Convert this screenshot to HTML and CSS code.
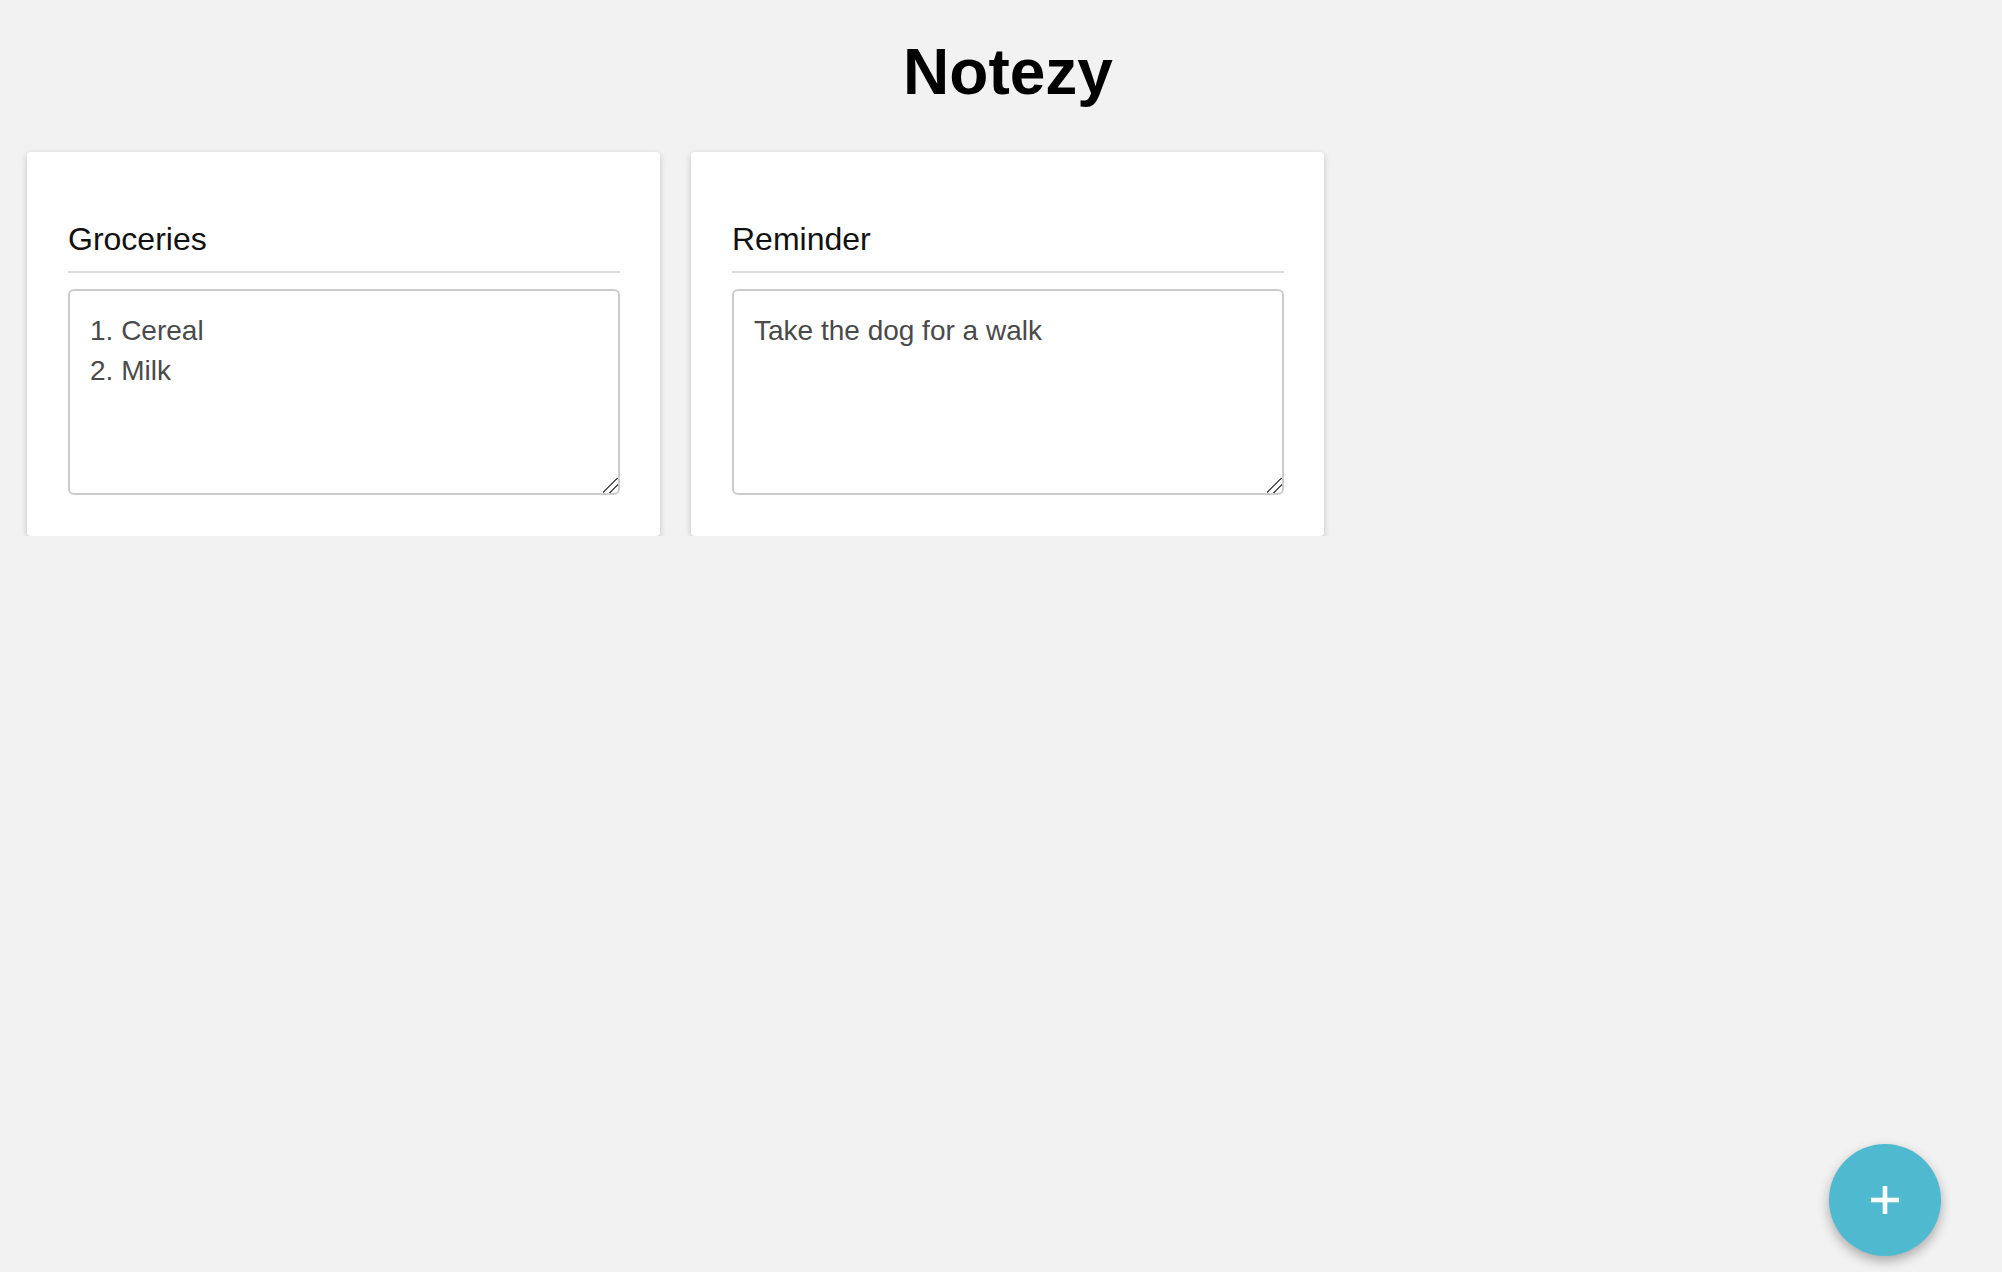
FILE: index.html
```html
<!DOCTYPE html>
<html lang="en">
<head>
<meta charset="utf-8">
<title>Notezy</title>
<link rel="stylesheet" href="styles.css">
</head>
<body>
<header class="header">
  <h1 class="title">Notezy</h1>
</header>
<main class="notes">
  <section class="note">
    <h2 class="note-title">Groceries</h2>
    <textarea class="note-body">1. Cereal
2. Milk</textarea>
  </section>
  <section class="note">
    <h2 class="note-title">Reminder</h2>
    <textarea class="note-body">Take the dog for a walk</textarea>
  </section>
</main>
<button class="fab" aria-label="Add note">
  <svg width="28" height="28" viewBox="0 0 28 28"><rect x="0" y="11.7" width="28" height="4.6" fill="#fff"/><rect x="11.7" y="0" width="4.6" height="28" fill="#fff"/></svg>
</button>
</body>
</html>
```

FILE: styles.css
```css
html, body {
  margin: 0;
  padding: 0;
  background: #f2f2f2;
  font-family: "Liberation Sans", Arial, Helvetica, sans-serif;
}

.header {
  padding-top: 35px;
  padding-left: 14px;
  text-align: center;
}

.title {
  margin: 0;
  font-size: 64px;
  font-weight: bold;
  color: #000;
  line-height: 74px;
}

.notes {
  display: flex;
  gap: 31px;
  padding: 43px 0 0 27px;
  align-items: flex-start;
}

.note {
  width: 633px;
  box-sizing: border-box;
  padding: 40px 40px 41px 41px;
  background: #fff;
  border-radius: 4px;
  box-shadow: 0 2px 6px rgba(0, 0, 0, 0.2);
}

.note-title {
  margin: 29px 0 16px 0;
  padding-bottom: 13px;
  border-bottom: 2px solid #dcdcdc;
  font-size: 32px;
  font-weight: normal;
  line-height: 37px;
  color: #111;
}

.note-body {
  display: block;
  width: 100%;
  height: 206px;
  box-sizing: border-box;
  margin: 0;
  padding: 20px 20px;
  border: 2px solid #cccccc;
  border-radius: 6px;
  font-family: "Liberation Sans", Arial, Helvetica, sans-serif;
  font-size: 28px;
  line-height: 40px;
  color: #4a4a4a;
  background: #fff;
  outline: none;
}

.note-body::-webkit-resizer {
  background: linear-gradient(135deg, transparent 0%, transparent 44%, #555 44%, #555 52%, transparent 52%, transparent 68%, #555 68%, #555 76%, transparent 76%);
}

.fab {
  position: fixed;
  right: 61px;
  bottom: 16px;
  width: 112px;
  height: 112px;
  border: none;
  border-radius: 50%;
  background: #4fb9cf;
  box-shadow: 0 5px 12px rgba(0, 0, 0, 0.3);
  display: flex;
  align-items: center;
  justify-content: center;
  padding: 0;
  cursor: pointer;
}
```
